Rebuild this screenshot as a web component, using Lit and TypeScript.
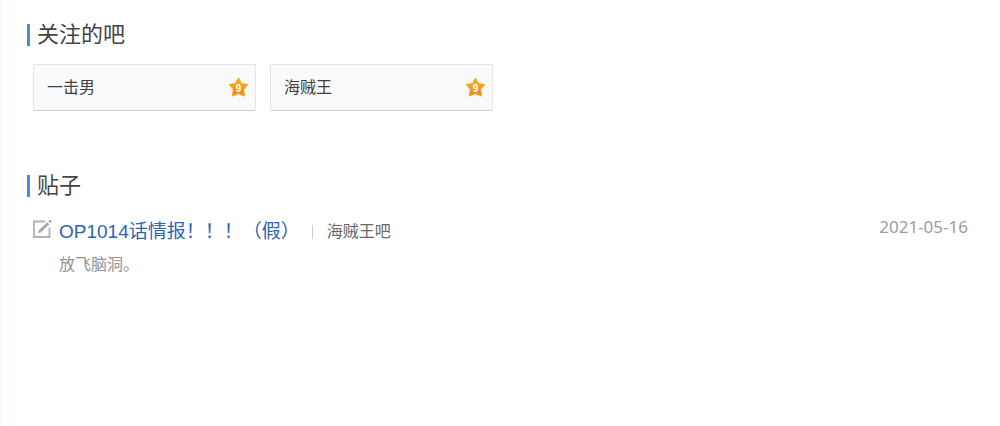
import { LitElement, html, css } from "lit";
import { customElement, property } from "lit/decorators.js";

interface Forum {
  name: string;
  level: number;
}

interface Post {
  title: string;
  forum: string;
  summary: string;
  date: string;
}

@customElement("forum-card")
class ForumCard extends LitElement {
  @property() name = "";
  @property({ type: Number }) level = 1;

  static styles = css`
    :host {
      display: block;
    }
    .card {
      box-sizing: border-box;
      display: flex;
      align-items: center;
      justify-content: space-between;
      height: 47px;
      padding: 0 6px 0 13px;
      background: #f9fafc;
      border: 1px solid #e4e6e9;
      border-bottom-color: #cdd0d4;
      border-radius: 2px;
      box-shadow: 0 0 1px #e4e6e9;
      color: #3f4040;
      font-size: 16px;
      line-height: 24px;
      text-decoration: none;
    }
    .star {
      display: block;
      width: 21px;
      height: 21px;
    }
    .level {
      font: bold 10px "Liberation Sans", sans-serif;
      fill: #fff;
    }
  `;

  render() {
    return html`<a class="card" href="#">
      <span>${this.name}</span>
      <svg class="star" viewBox="0 0 21 21" role="img" aria-label="level ${this.level}">
        <defs>
          <linearGradient id="gold" x1="0" y1="0" x2="0" y2="1">
            <stop offset="0" stop-color="#f9b41c" />
            <stop offset="1" stop-color="#e8870c" />
          </linearGradient>
        </defs>
        <path
          d="M10.5 1.3 13.3 6.6 19.6 7.6 15.6 12.1 16.6 18.9 10.5 16.6 4.4 18.9 5.4 12.1 1.4 7.6 7.7 6.6Z"
          fill="url(#gold)" stroke="#f3a830" stroke-width="1.2" stroke-linejoin="round" />
        <text class="level" x="10.5" y="14.5" text-anchor="middle">${this.level}</text>
      </svg>
    </a>`;
  }
}

@customElement("post-item")
class PostItem extends LitElement {
  @property({ attribute: false }) post!: Post;

  static styles = css`
    :host {
      display: block;
    }
    .post {
      display: grid;
      grid-template-columns: 18px 1fr auto;
      column-gap: 8px;
    }
    .icon {
      display: block;
      width: 19px;
      height: 18px;
      margin-top: 3px;
    }
    .line {
      display: flex;
      align-items: center;
      line-height: 30px;
    }
    .title {
      color: #2d64b3;
      font-size: 19px;
      text-decoration: none;
    }
    .divider {
      width: 1px;
      height: 14px;
      margin: 0 14px 0 12px;
      background: #ccc;
    }
    .forum {
      color: #666;
      font-size: 16px;
      text-decoration: none;
    }
    .date {
      color: #999ca0;
      font-family: "Noto Sans", sans-serif;
      font-size: 17px;
      line-height: 20px;
    }
    .summary {
      grid-column: 2;
      margin: 6px 0 0;
      color: #909396;
      font-size: 16px;
      line-height: 24px;
    }
  `;

  render() {
    const { title, forum, summary, date } = this.post;
    return html`<article class="post">
      <svg class="icon" viewBox="0 0 19 18" fill="none" aria-hidden="true">
        <path d="M12 1.5H1V17H16.5V7.5" stroke="#b0b3b6" stroke-width="1.8" />
        <path d="M7.2 11 15.2 3.2" stroke="#a4a7aa" stroke-width="3" />
        <path d="M16.2 2.2 18 .5" stroke="#a4a7aa" stroke-width="2.8" />
        <path d="M5.2 13 5.9 9.6 8.5 12.3Z" fill="#a4a7aa" />
      </svg>
      <div class="line">
        <a class="title" href="#">${title}</a>
        <span class="divider"></span>
        <a class="forum" href="#">${forum}</a>
      </div>
      <time class="date" datetime=${date}>${date}</time>
      <p class="summary">${summary}</p>
    </article>`;
  }
}

@customElement("app-root")
class AppRoot extends LitElement {
  private forums: Forum[] = [
    { name: "一击男", level: 9 },
    { name: "海贼王", level: 9 },
  ];

  private posts: Post[] = [
    {
      title: "OP1014话情报！！！（假）",
      forum: "海贼王吧",
      summary: "放飞脑洞。",
      date: "2021-05-16",
    },
  ];

  static styles = css`
    :host {
      display: block;
      box-sizing: border-box;
      min-height: 100vh;
      padding: 20px 32px 20px 26px;
      border-left: 1px solid #effbfe;
      background: #fff;
      font-family: "Liberation Sans", "Noto Sans CJK SC", sans-serif;
    }
    .heading {
      display: flex;
      align-items: center;
      gap: 7px;
      margin: 0;
      color: #444;
      font-size: 22px;
      font-weight: 400;
      line-height: 30px;
    }
    .heading::before {
      content: "";
      width: 3px;
      height: 22px;
      background: #4a86e8;
    }
    .forums {
      display: grid;
      grid-template-columns: repeat(auto-fill, 223px);
      gap: 14px;
      margin: 14px 0 60px 6px;
    }
    .posts {
      margin: 16px 0 0 6px;
    }
  `;

  render() {
    return html`
      <section>
        <h2 class="heading">关注的吧</h2>
        <div class="forums">
          ${this.forums.map((f) => html`<forum-card .name=${f.name} .level=${f.level}></forum-card>`)}
        </div>
      </section>
      <section>
        <h2 class="heading">贴子</h2>
        <div class="posts">
          ${this.posts.map((p) => html`<post-item .post=${p}></post-item>`)}
        </div>
      </section>
    `;
  }
}
